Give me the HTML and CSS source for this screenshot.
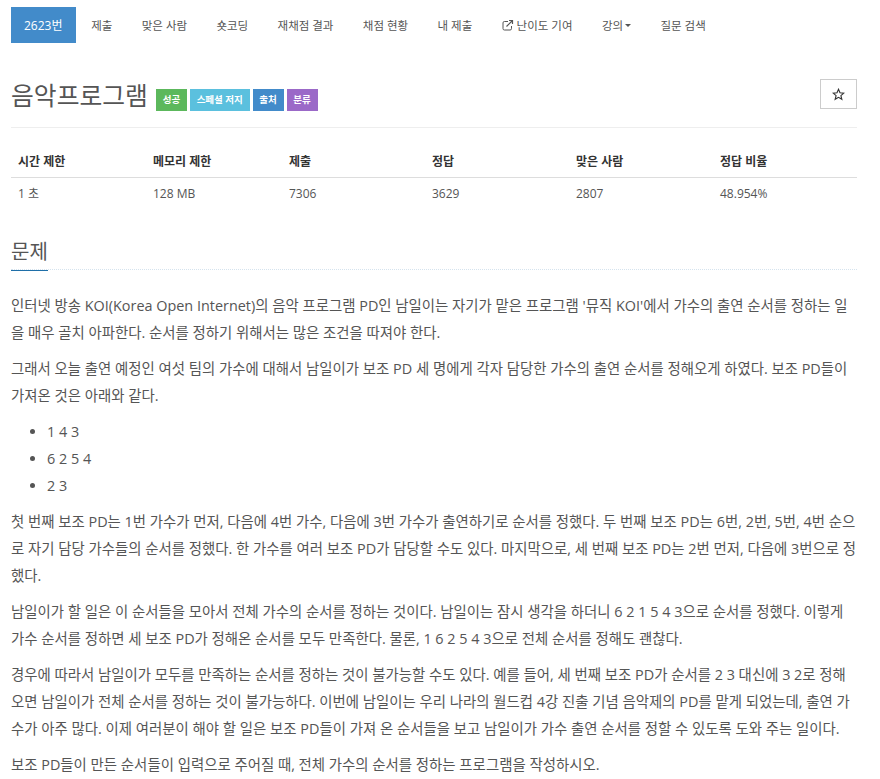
FILE: index.html
```html
<!DOCTYPE html>
<html lang="ko">
<head>
<meta charset="utf-8">
<title>음악프로그램</title>
<link rel="stylesheet" href="styles.css">
</head>
<body>
<div class="page">
  <nav class="tabs">
    <a class="tab active">2623번</a>
    <a class="tab">제출</a>
    <a class="tab">맞은 사람</a>
    <a class="tab">숏코딩</a>
    <a class="tab">재채점 결과</a>
    <a class="tab">채점 현황</a>
    <a class="tab">내 제출</a>
    <a class="tab"><svg class="ext" viewBox="0 0 12 12" width="12" height="12"><path d="M9.5 7v2.6A1.4 1.4 0 0 1 8.1 11H2.4A1.4 1.4 0 0 1 1 9.6V3.9A1.4 1.4 0 0 1 2.4 2.5H6" fill="none" stroke="#555" stroke-width="1"/><path d="M4.5 7.5 10 2M7 1.5h3.5V5" fill="none" stroke="#555" stroke-width="1.2"/></svg> 난이도 기여</a>
    <a class="tab">강의<span class="caret"></span></a>
    <a class="tab">질문 검색</a>
  </nav>
  <header class="title-row">
    <h1 class="title">음악프로그램 <span class="labels"><span class="label green">성공</span><span class="label cyan">스페셜 저지</span><span class="label blue">출처</span><span class="label purple">분류</span></span></h1>
    <button class="star"><svg viewBox="0 0 14 14" width="13" height="13"><path d="M7 1.4 8.6 5.2 12.7 5.5 9.6 8.2 10.6 12.2 7 10 3.4 12.2 4.4 8.2 1.3 5.5 5.4 5.2Z" fill="none" stroke="#333" stroke-width="1.2"/></svg></button>
  </header>
  <table class="info">
    <thead>
      <tr><th class="c1">시간 제한</th><th class="c2">메모리 제한</th><th class="c3">제출</th><th class="c4">정답</th><th class="c5">맞은 사람</th><th>정답 비율</th></tr>
    </thead>
    <tbody>
      <tr><td>1 초</td><td>128 MB</td><td>7306</td><td>3629</td><td>2807</td><td>48.954%</td></tr>
    </tbody>
  </table>
  <section>
    <div class="headline"><h2>문제</h2></div>
    <div class="body">
      <p>인터넷 방송 KOI(Korea Open Internet)의 음악 프로그램 PD인 남일이는 자기가 맡은 프로그램 '뮤직 KOI'에서 가수의 출연 순서를 정하는 일을 매우 골치 아파한다. 순서를 정하기 위해서는 많은 조건을 따져야 한다.</p>
      <p>그래서 오늘 출연 예정인 여섯 팀의 가수에 대해서 남일이가 보조 PD 세 명에게 각자 담당한 가수의 출연 순서를 정해오게 하였다. 보조 PD들이 가져온 것은 아래와 같다.</p>
      <ul>
        <li>1 4 3</li>
        <li>6 2 5 4</li>
        <li>2 3</li>
      </ul>
      <p>첫 번째 보조 PD는 1번 가수가 먼저, 다음에 4번 가수, 다음에 3번 가수가 출연하기로 순서를 정했다. 두 번째 보조 PD는 6번, 2번, 5번, 4번 순으로 자기 담당 가수들의 순서를 정했다. 한 가수를 여러 보조 PD가 담당할 수도 있다. 마지막으로, 세 번째 보조 PD는 2번 먼저, 다음에 3번으로 정했다.</p>
      <p>남일이가 할 일은 이 순서들을 모아서 전체 가수의 순서를 정하는 것이다. 남일이는 잠시 생각을 하더니 6 2 1 5 4 3으로 순서를 정했다. 이렇게 가수 순서를 정하면 세 보조 PD가 정해온 순서를 모두 만족한다. 물론, 1 6 2 5 4 3으로 전체 순서를 정해도 괜찮다.</p>
      <p>경우에 따라서 남일이가 모두를 만족하는 순서를 정하는 것이 불가능할 수도 있다. 예를 들어, 세 번째 보조 PD가 순서를 2 3 대신에 3 2로 정해오면 남일이가 전체 순서를 정하는 것이 불가능하다. 이번에 남일이는 우리 나라의 월드컵 4강 진출 기념 음악제의 PD를 맡게 되었는데, 출연 가수가 아주 많다. 이제 여러분이 해야 할 일은 보조 PD들이 가져 온 순서들을 보고 남일이가 가수 출연 순서를 정할 수 있도록 도와 주는 일이다.</p>
      <p>보조 PD들이 만든 순서들이 입력으로 주어질 때, 전체 가수의 순서를 정하는 프로그램을 작성하시오.</p>
    </div>
  </section>
</div>
</body>
</html>
```
FILE: styles.css
```css
html, body { margin: 0; padding: 0; background: #fff; overflow: hidden; }
body { height: 779px; font-family: "Open Sans", "Noto Sans CJK KR", sans-serif; color: #555; font-size: 14px; }
.page { padding: 7px 23px 0 11px; }
.tabs { display: flex; height: 36px; font-size: 11.5px; }
.tab { display: flex; align-items: center; gap: 3px; padding: 0 14.7px; color: #555; white-space: nowrap; }
.tab.active { background: #428bca; color: #fff; padding: 0 13px; margin-right: 1px; font-size: 12px; }
.ext { display: block; }
.caret { display: inline-block; margin-left: -1px; border-top: 3px solid #555; border-left: 3px solid transparent; border-right: 3px solid transparent; }
.title-row { display: flex; justify-content: space-between; align-items: flex-start; margin-top: 28px; height: 56px; border-bottom: 1px solid #eee; }
.title { margin: 8px 0 0; font-size: 24.8px; font-weight: 400; line-height: 32px; color: #555; display: flex; align-items: flex-end; }
.labels { display: flex; gap: 3px; margin-left: 8px; }
.label { display: block; height: 22px; line-height: 22px; padding: 0 6.75px; font-size: 9.5px; font-weight: 700; color: #fff; }
.green { background: #5cb85c; }
.cyan { background: #5bc0de; }
.blue { background: #428bca; }
.purple { background: #9b69c8; }
.star { width: 37px; height: 30px; margin-top: 8px; padding: 0; background: #fff; border: 1px solid #ccc; display: flex; align-items: center; justify-content: center; }
.info { width: 100%; margin-top: 20px; border-collapse: collapse; font-size: 12px; table-layout: fixed; }
.info th { box-sizing: border-box; text-align: left; font-weight: 700; color: #333; padding: 0 7px 3px; height: 29px; border-bottom: 1px solid #ddd; }
.info td { padding: 0 7px; height: 31px; color: #555; }
.c1 { width: 135px; }
.c2 { width: 136px; }
.c3 { width: 143px; }
.c4, .c5 { width: 144px; }
.headline { display: flex; align-items: flex-start; margin-top: 28px; height: 32px; border-bottom: 1px dotted #d5e3ee; }
.headline h2 { height: 33px; margin: 0; font-size: 20px; font-weight: 400; line-height: 29px; color: #555; border-bottom: 1px solid #1f6fa8; }
.body { padding-top: 22px; line-height: 27px; font-size: 14.41px; }
.body p { margin: 0 0 9px; }
.body ul { margin: 0 0 9px; padding-left: 36px; }
```
